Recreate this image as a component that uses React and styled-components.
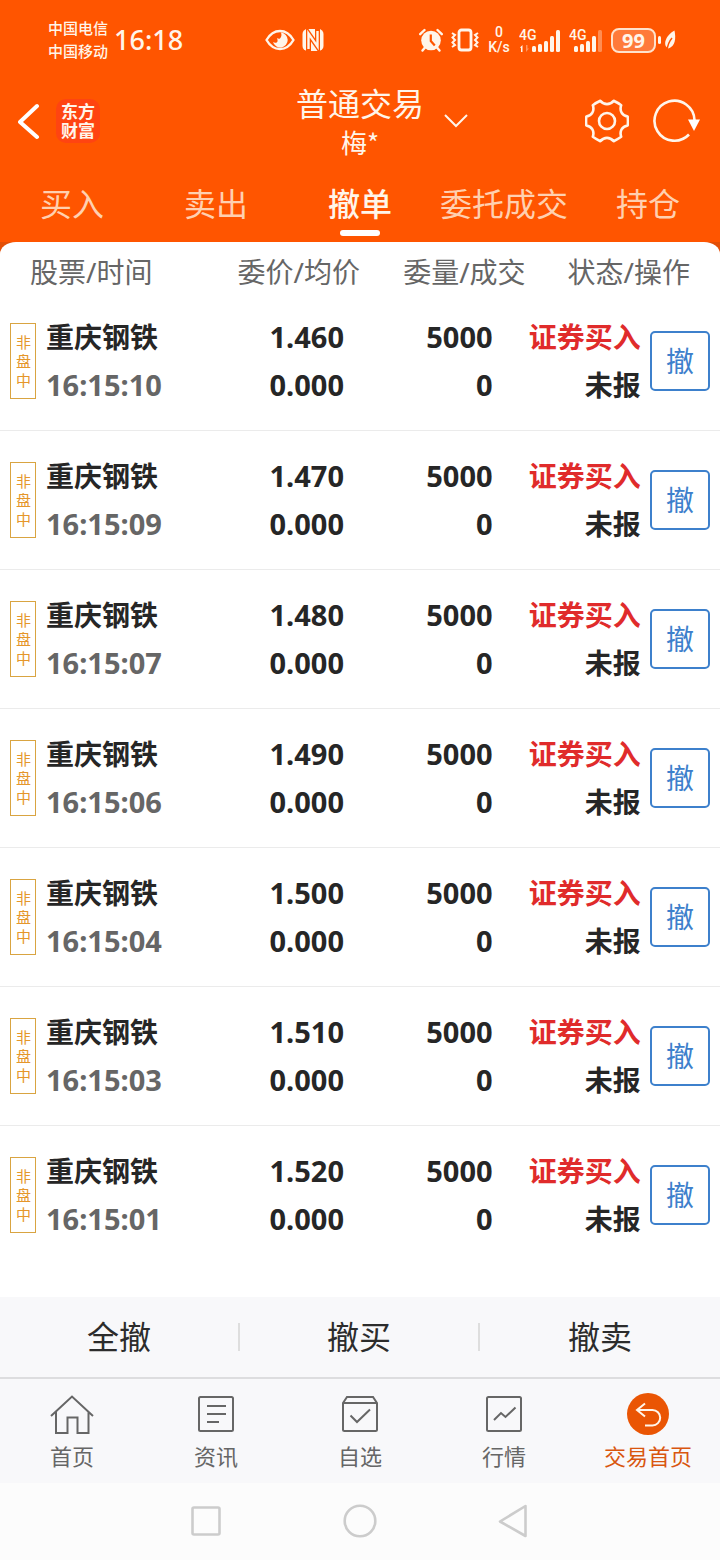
import React, { useState } from 'react'
import styled, { createGlobalStyle } from 'styled-components'

const GlobalStyle = createGlobalStyle`
  * {
    box-sizing: border-box;
  }

  body {
    margin: 0;
    background: #fff;
    font-family: 'Noto Sans', 'Noto Sans CJK SC', sans-serif;
  }

  button {
    margin: 0;
    padding: 0;
    border: none;
    background: none;
    color: inherit;
    font-family: inherit;
    cursor: pointer;
  }

  svg {
    display: block;
    flex: none;
  }
`

const Page = styled.div`
  display: flex;
  flex-direction: column;
  min-height: 100vh;
`

const TopArea = styled.header`
  background: #ff5500;
  color: #fff5ea;
`

const StatusBar = styled.div`
  display: flex;
  align-items: center;
  justify-content: space-between;
  height: 82px;
  padding: 0 44px 2px 48px;
`

const StatusGroup = styled.div`
  display: flex;
  align-items: center;
  gap: ${props => props.$gap}px;
  margin-right: ${props => props.$after || 0}px;
`

const Carriers = styled.div`
  font-size: 15px;
  font-weight: 500;
  line-height: 23px;
`

const Clock = styled.div`
  font-size: 27px;
  font-weight: 500;
  line-height: 46px;
`

const NetSpeed = styled.div`
  width: 24px;
  font-family: Roboto, sans-serif;
  font-size: 14px;
  font-weight: 500;
  line-height: 15px;
  text-align: center;
`

const Battery = styled.div`
  width: 45px;
  height: 25px;
  border: 2px solid #ffe2cc;
  border-radius: 8px;
  background: #ff7a3a;
  font-size: 20px;
  font-weight: 700;
  line-height: 21px;
  text-align: center;
`

const TitleBar = styled.div`
  display: grid;
  grid-template-columns: 1fr auto 1fr;
  align-items: center;
  min-height: 78px;
  padding: 0 18px;
`

const TitleLeft = styled.div`
  display: flex;
  align-items: center;
  gap: 16px;
`

const TitleRight = styled.div`
  display: flex;
  align-items: center;
  gap: 24px;
  padding-left: 20px;
`

const IconButton = styled.button`
  display: block;
  margin-right: ${props => props.$push ? 'auto' : '0'};
`

const Logo = styled.div`
  width: 44px;
  height: 44px;
  padding: 3px 5px;
  border-radius: 10px;
  background: #ff4411;
  font-size: 17px;
  font-weight: 700;
  line-height: 19px;
  word-break: break-all;
`

const Title = styled.h1`
  margin: 0;
  font-size: 32px;
  font-weight: 400;
  line-height: 42px;
  text-align: center;
`

const Account = styled.div`
  font-family: 'Noto Sans CJK SC', sans-serif;
  font-size: 26px;
  line-height: 34px;
  text-align: center;
`

const Tabs = styled.nav`
  display: grid;
  grid-template-columns: repeat(5, 1fr);
  padding-top: 19px;
`

const Tab = styled.button`
  display: flex;
  flex-direction: column;
  align-items: center;
  padding-bottom: 6px;
  color: ${props => props.$active ? '#fff5ea' : '#ffd0b0'};
  font-size: 32px;
  font-weight: ${props => props.$active ? 500 : 400};
  line-height: 50px;

  &::after {
    content: '';
    width: 40px;
    height: 6px;
    margin-top: 1px;
    border-radius: 3px;
    background: ${props => props.$active ? '#fff' : 'transparent'};
  }
`

const Main = styled.main`
  flex: 1;
  background: linear-gradient(#e34f06 30px, #fff 30px);
`

const Card = styled.div`
  min-height: 100%;
  padding-bottom: 32px;
  border-radius: 16px 16px 0 0 / 12px 12px 0 0;
  background: #fff;
`

const OrderTable = styled.table`
  width: 100%;
  border-collapse: collapse;
  table-layout: fixed;
`

const Col = styled.col`
  width: ${props => props.$width};
`

const HeadCell = styled.th`
  padding: 11px ${props => props.$end || 0}px 1px ${props => props.$start || 0}px;
  color: #666;
  font-size: 28px;
  font-weight: 400;
  line-height: 38px;
  text-align: ${props => props.$start ? 'left' : 'right'};
  white-space: nowrap;
`

const OrderRow = styled.tr`
  border-bottom: 1px solid #ebebeb;

  &:last-child {
    border-bottom-color: transparent;
  }
`

const Cell = styled.td`
  padding: 21px ${props => props.$end || 0}px 21px 0;
  text-align: right;
  white-space: nowrap;
`

const Stock = styled.div`
  display: flex;
  align-items: center;
  gap: 10px;
  padding-left: 10px;
  text-align: left;
`

const SessionTag = styled.span`
  width: 26px;
  padding: 9px 5px 8px;
  border: 1px solid #d9a441;
  color: #e5962a;
  font-size: 15px;
  line-height: 19px;
  white-space: normal;
  word-break: break-all;
`

const Line = styled.div`
  color: ${props => props.$color || '#262626'};
  font-size: ${props => props.$number ? 29 : 28}px;
  font-weight: 700;
  line-height: 48px;
`

const CancelButton = styled.button`
  width: 60px;
  height: 60px;
  border: 2px solid #3d80cc;
  border-radius: 5px;
  color: #3d80cc;
  font-size: 28px;
  line-height: 56px;
  vertical-align: middle;
`

const BulkBar = styled.div`
  display: grid;
  grid-template-columns: repeat(3, 1fr);
  align-items: center;
  height: 80px;
  background: #f8f8fa;
`

const BulkButton = styled.button`
  height: 28px;
  border-right: 2px solid #dedede;
  color: #2c2c2c;
  font-size: 32px;
  line-height: 28px;

  &:last-child {
    border-right: none;
  }
`

const BottomNav = styled.nav`
  display: grid;
  grid-template-columns: repeat(5, 1fr);
  border-top: 2px solid #dddddf;
  background: #f8f8fa;
`

const NavLink = styled.a`
  display: flex;
  flex-direction: column;
  align-items: center;
  gap: 5px;
  padding: 13px 0 12px;
  color: ${props => props.$active ? '#d9560f' : '#666'};
  font-size: 22px;
  line-height: 30px;
  text-decoration: none;
`

const SystemBar = styled.div`
  display: grid;
  grid-template-columns: repeat(3, 1fr);
  place-items: center;
  height: 77px;
  padding: 0 18% 2px;
  background: #fcfcfc;
`

const EyeIcon = () => (
  <svg width="30" height="22" viewBox="0 0 30 22" fill="none">
    <path d="M1.500 11C5 5 9.500 2 15 2s10 3 13.500 9C25 17 20.500 20 15 20S5 17 1.500 11z" stroke="currentColor" strokeWidth="2.400" strokeLinejoin="round" />
    <path d="M16 3.500a7.500 7.500 0 1 1-8 9.500c2.300 1.500 4.800.4 4.600-1.600-.1-1-.6-1.600-.2-2.400.8.9 2 1 2.800.2 1.300-1.300 1.600-3.500.8-5.700z" fill="currentColor" />
  </svg>
)

const NfcIcon = () => (
  <svg width="22" height="24" viewBox="0 0 22 24">
    <rect x="0.500" y="1" width="21" height="22" rx="5" fill="currentColor" />
    <path d="M6.500 24V5.500l9 13V0" fill="none" stroke="#ff5500" strokeWidth="5" />
    <path d="M6.500 21V5.500l9 13V3" fill="none" stroke="currentColor" strokeWidth="2.400" />
  </svg>
)

const AlarmIcon = () => (
  <svg width="24" height="24" viewBox="0 0 24 24" fill="none" stroke="currentColor">
    <circle cx="12" cy="12.500" r="9.800" fill="currentColor" stroke="none" />
    <path d="M1.200 6.200 5.500 2M22.800 6.200 18.500 2" strokeWidth="2.400" strokeLinecap="round" />
    <path d="M6 19.500l-2.500 3M18 19.500l2.500 3" strokeWidth="2.400" strokeLinecap="round" />
    <path d="M11.800 6.500v6.500l4 4.500" stroke="#ff5500" strokeWidth="2.200" />
  </svg>
)

const VibrateIcon = () => (
  <svg width="28" height="24" viewBox="0 0 28 24" fill="none" stroke="currentColor">
    <rect x="8" y="2" width="12" height="20" rx="2.500" strokeWidth="2.800" />
    <path d="M1 5l3 2-2.500 2.500L4 12l-2.500 2.500L4 17l-3 2M27 5l-3 2 2.500 2.500L24 12l2.500 2.500L24 17l3 2" strokeWidth="2" />
  </svg>
)

const SignalIcon = ({ start, weak }) => (
  <svg width={start + 29} height="26" viewBox={`0 0 ${start + 29} 26`} fill="currentColor">
    <text x="0" y="13" fontFamily="Roboto, sans-serif" fontSize="14" fontWeight="500">4G</text>
    {[19, 17, 14, 9, 3].map((top, i) => (
      <rect key={top} x={start + i * 6} y={top} width="4" height={25 - top} rx="1.500" opacity={weak && i === 4 ? 0.35 : 1} />
    ))}
    {!weak && <path d="M1 20.500l2.500-2.500v7H2v-4z" />}
    {!weak && <path d="M7 18v7l3-3.500H8.500V18z" opacity="0.400" />}
  </svg>
)

const LeafIcon = () => (
  <svg width="18" height="22" viewBox="0 0 18 22">
    <rect x="0" y="7" width="3" height="8" rx="1.500" fill="currentColor" />
    <path d="M16.500 1.500c1.500 8 1 15.500-6 18-6.500-3-3-13 6-18z" fill="currentColor" />
    <path d="M9 21.500c.5-4.500 2-9 5-12.500" fill="none" stroke="#ff5500" strokeWidth="1.500" />
  </svg>
)

const BackIcon = () => (
  <svg width="22" height="40" viewBox="1 0 22 40" fill="none" stroke="#fff" strokeWidth="4" strokeLinecap="round" strokeLinejoin="round">
    <path d="M20 5 3 21l17 15" />
  </svg>
)

const DownIcon = () => (
  <svg width="24" height="14" viewBox="0 0 24 14" fill="none" stroke="currentColor" strokeWidth="2">
    <path d="M1 1l11 11L23 1" />
  </svg>
)

const polar = (r, deg) => {
  const a = deg * Math.PI / 180
  return `${(23 + r * Math.cos(a)).toFixed(1)} ${(23 + r * Math.sin(a)).toFixed(1)}`
}

// six teeth with a scooped valley between each pair
const gearPath = [0, 60, 120, 180, 240, 300].map((deg, i) => (
  `${i === 0 ? 'M' : 'L'}${polar(21.2, deg - 12)} Q${polar(21.2, deg)} ${polar(21.2, deg + 12)} ` +
  `C${polar(16, deg + 20)} ${polar(16, deg + 40)} ${polar(21.2, deg + 48)}`
)).join(' ') + 'Z'

const GearIcon = () => (
  <svg width="44" height="44" viewBox="1 1 44 44" fill="none" stroke="currentColor" strokeWidth="2.600" strokeLinejoin="round">
    <path d={gearPath} />
    <circle cx="23" cy="23" r="8" />
  </svg>
)

const RefreshIcon = () => (
  <svg width="49" height="46" viewBox="0 0 49 46" fill="none">
    <path d="M36 36.500A20 20 0 1 1 41.500 22" stroke="currentColor" strokeWidth="2.600" />
    <path d="M35 21.500h12L41 33z" fill="#fff" />
  </svg>
)

const NavIcon = ({ children }) => (
  <svg width="44" height="44" viewBox="0 0 44 44" fill="none" stroke="currentColor" strokeWidth="2">
    {children}
  </svg>
)

const tabs = ['买入', '卖出', '撤单', '委托成交', '持仓']

const orders = [
  { time: '16:15:10', price: '1.460' },
  { time: '16:15:09', price: '1.470' },
  { time: '16:15:07', price: '1.480' },
  { time: '16:15:06', price: '1.490' },
  { time: '16:15:04', price: '1.500' },
  { time: '16:15:03', price: '1.510' },
  { time: '16:15:01', price: '1.520' }
]

const navItems = [
  { label: '首页', icon: <path d="M1 24 22 4.500 43 24M6 19.500V41h11.500V25.500h10V41H38.500V19.500" /> },
  {
    label: '资讯',
    icon: (
      <>
        <rect x="5" y="5" width="34" height="34" rx="1.500" />
        <path d="M13 14h19M13 22h19M13 30h12" />
      </>
    )
  },
  {
    label: '自选',
    icon: (
      <>
        <path d="M5 11l4-6h26l4 6v26.500a1.500 1.500 0 0 1-1.500 1.500h-31A1.500 1.500 0 0 1 5 37.500zM5 11h34" />
        <path d="M12.500 23.500l6.500 6.500 13-12.500" />
      </>
    )
  },
  {
    label: '行情',
    icon: (
      <>
        <rect x="5" y="5" width="34" height="34" rx="1.500" />
        <path d="M12 28l7-7 4.500 4L33.500 15.500" />
      </>
    )
  },
  {
    label: '交易首页',
    active: true,
    icon: (
      <>
        <circle cx="22" cy="22" r="21" fill="#ea5504" stroke="none" />
        <path d="M19 11.500 11 18l8 6.500M11 18h15.500a7.700 7.700 0 0 1 0 15.400H19" stroke="#fff5ea" />
      </>
    )
  }
]

const Order = ({ order }) => (
  <OrderRow>
    <Cell>
      <Stock>
        <SessionTag>非盘中</SessionTag>
        <div>
          <Line>重庆钢铁</Line>
          <Line $number $color="#666">{order.time}</Line>
        </div>
      </Stock>
    </Cell>
    <Cell $end={16}>
      <Line $number>{order.price}</Line>
      <Line $number>0.000</Line>
    </Cell>
    <Cell $end={33}>
      <Line $number>5000</Line>
      <Line $number>0</Line>
    </Cell>
    <Cell>
      <Line $color="#e02b2b">证券买入</Line>
      <Line>未报</Line>
    </Cell>
    <Cell $end={10}>
      <CancelButton type="button">撤</CancelButton>
    </Cell>
  </OrderRow>
)

const App = () => {
  const [activeTab, setActiveTab] = useState('撤单')

  return (
    <Page>
      <GlobalStyle />
      <TopArea>
        <StatusBar>
          <StatusGroup $gap={6}>
            <Carriers>
              <div>中国电信</div>
              <div>中国移动</div>
            </Carriers>
            <Clock>16:18</Clock>
          </StatusGroup>
          <StatusGroup $gap={7} $after={14}>
            <EyeIcon />
            <NfcIcon />
          </StatusGroup>
          <StatusGroup $gap={8}>
            <AlarmIcon />
            <VibrateIcon />
            <NetSpeed>
              <div>0</div>
              <div>K/s</div>
            </NetSpeed>
            <SignalIcon start={13} />
            <SignalIcon start={5} weak />
            <StatusGroup $gap={2}>
              <Battery>99</Battery>
              <LeafIcon />
            </StatusGroup>
          </StatusGroup>
        </StatusBar>
        <TitleBar>
          <TitleLeft>
            <IconButton type="button" aria-label="返回"><BackIcon /></IconButton>
            <Logo>东方财富</Logo>
          </TitleLeft>
          <div>
            <Title>普通交易</Title>
            <Account>梅*</Account>
          </div>
          <TitleRight>
            <IconButton type="button" aria-label="切换账户" $push><DownIcon /></IconButton>
            <IconButton type="button" aria-label="设置"><GearIcon /></IconButton>
            <IconButton type="button" aria-label="刷新"><RefreshIcon /></IconButton>
          </TitleRight>
        </TitleBar>
        <Tabs>
          {tabs.map(tab => (
            <Tab key={tab} type="button" $active={tab === activeTab} onClick={() => setActiveTab(tab)}>
              {tab}
            </Tab>
          ))}
        </Tabs>
      </TopArea>
      <Main>
        <Card>
          <OrderTable>
            <colgroup>
              <Col $width="29%" />
              <Col $width="21%" />
              <Col $width="23%" />
              <Col $width="16%" />
              <Col $width="11%" />
            </colgroup>
            <thead>
              <tr>
                <HeadCell scope="col" $start={30}>股票/时间</HeadCell>
                <HeadCell scope="col">委价/均价</HeadCell>
                <HeadCell scope="col">委量/成交</HeadCell>
                <HeadCell scope="col" colSpan={2} $end={30}>状态/操作</HeadCell>
              </tr>
            </thead>
            <tbody>
              {orders.map(order => <Order key={order.time} order={order} />)}
            </tbody>
          </OrderTable>
        </Card>
      </Main>
      <BulkBar>
        <BulkButton type="button">全撤</BulkButton>
        <BulkButton type="button">撤买</BulkButton>
        <BulkButton type="button">撤卖</BulkButton>
      </BulkBar>
      <BottomNav>
        {navItems.map(item => (
          <NavLink key={item.label} href="#" $active={item.active}>
            <NavIcon>{item.icon}</NavIcon>
            {item.label}
          </NavLink>
        ))}
      </BottomNav>
      <SystemBar>
        <IconButton type="button" aria-label="最近任务">
          <svg width="32" height="32" viewBox="0 0 32 32" fill="none" stroke="#ccc" strokeWidth="2.600">
            <rect x="2.500" y="2.500" width="27" height="27" rx="1.500" />
          </svg>
        </IconButton>
        <IconButton type="button" aria-label="主屏幕">
          <svg width="34" height="34" viewBox="0 0 34 34" fill="none" stroke="#ccc" strokeWidth="2.600">
            <circle cx="17" cy="17" r="15.300" />
          </svg>
        </IconButton>
        <IconButton type="button" aria-label="返回上一页">
          <svg width="32" height="34" viewBox="0 0 32 34" fill="none" stroke="#ccc" strokeWidth="2.600" strokeLinejoin="round">
            <path d="M27.500 2v30L2 17.500z" />
          </svg>
        </IconButton>
      </SystemBar>
    </Page>
  )
}

export default App
